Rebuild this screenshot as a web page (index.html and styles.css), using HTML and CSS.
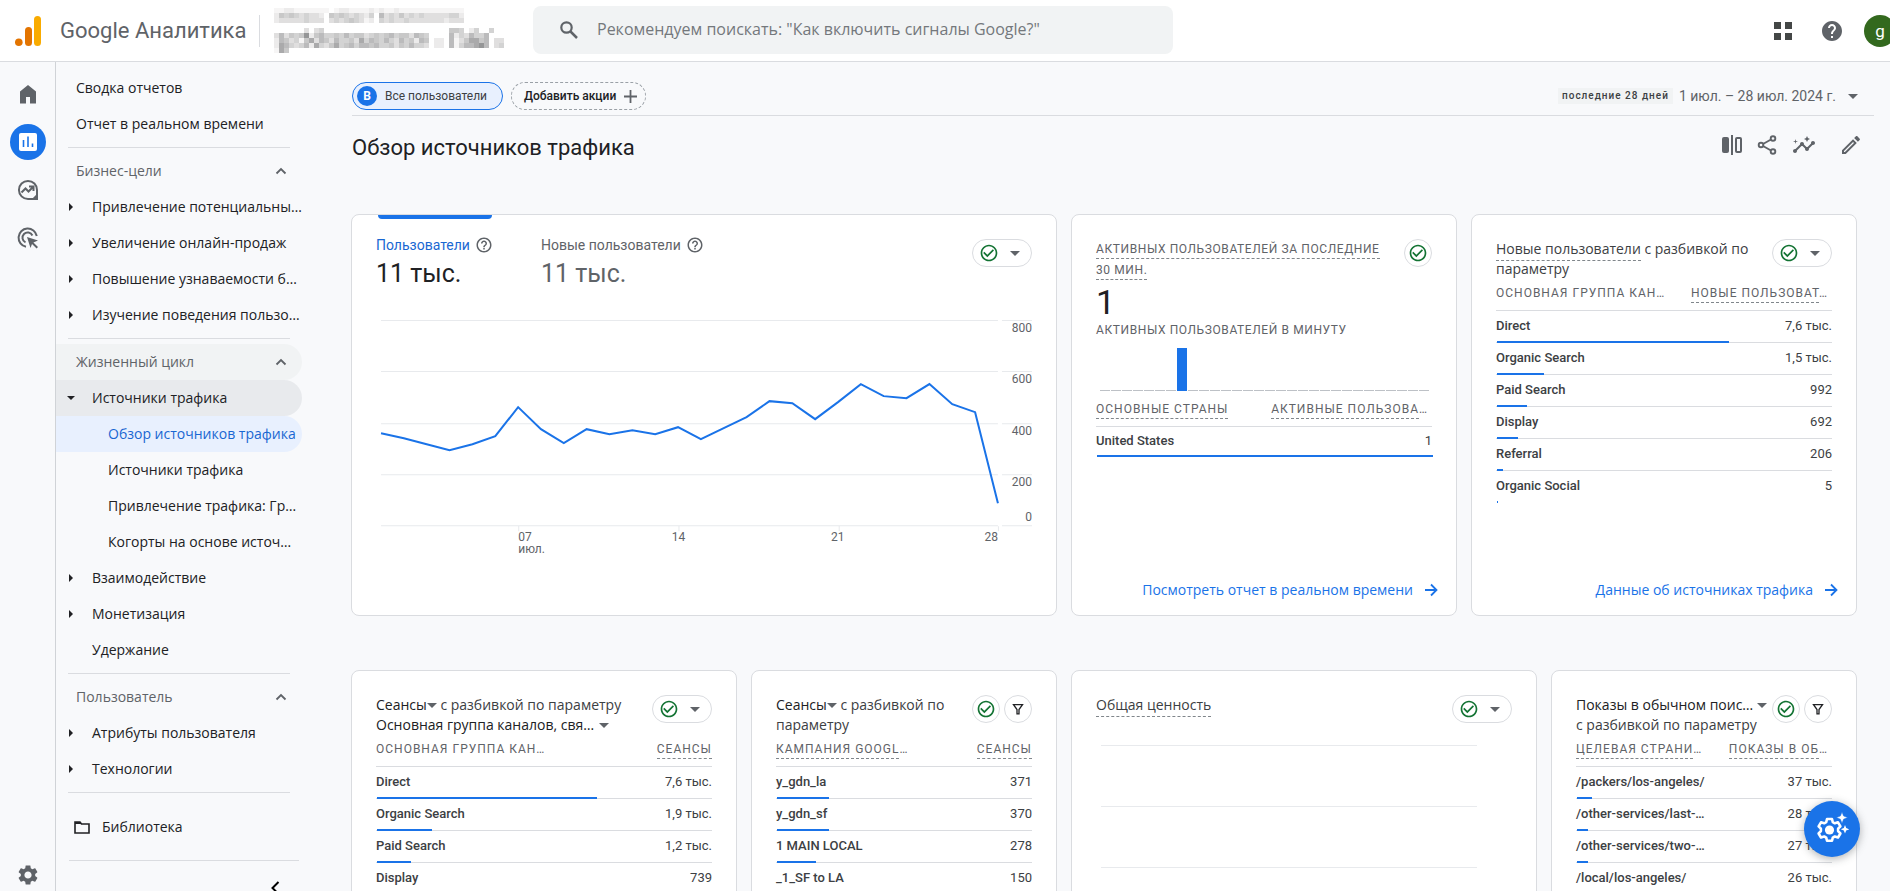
FILE: index.html
```html
<!DOCTYPE html>
<html lang="ru">
<head>
<meta charset="utf-8">
<meta name="viewport" content="width=device-width, initial-scale=1">
<title>Google Аналитика</title>
<link rel="stylesheet" href="styles.css">
</head>
<body>
<svg class="sprite" aria-hidden="true">
  <symbol id="i-check" viewBox="0 0 24 24"><path d="M16.6 7.6 10 14.2l-3.6-3.6L5 12l5 5 8-8zM12 2C6.5 2 2 6.5 2 12s4.5 10 10 10 10-4.500 10-10S17.500 2 12 2zm0 18c-4.400 0-8-3.600-8-8s3.600-8 8-8 8 3.600 8 8-3.600 8-8 8z"/></symbol>
  <symbol id="i-help" viewBox="0 0 24 24"><path d="M11 18h2v-2h-2v2zm1-16C6.480 2 2 6.480 2 12s4.480 10 10 10 10-4.480 10-10S17.520 2 12 2zm0 18c-4.410 0-8-3.590-8-8s3.590-8 8-8 8 3.590 8 8-3.590 8-8 8zm0-14c-2.210 0-4 1.790-4 4h2c0-1.100.9-2 2-2s2 .9 2 2c0 2-3 1.750-3 5h2c0-2.250 3-2.500 3-5 0-2.210-1.790-4-4-4z"/></symbol>
  <symbol id="i-down" viewBox="0 0 10 5"><path d="M0 0h10L5 5z"/></symbol>
  <symbol id="i-right" viewBox="0 0 4 8"><path d="M0 0v8l4-4z"/></symbol>
  <symbol id="i-up" viewBox="0 0 12 8"><path d="M1.500 6.500 6 2l4.500 4.500" fill="none" stroke="currentColor" stroke-width="1.800"/></symbol>
  <symbol id="i-arrow" viewBox="0 0 14 14"><path d="M1 7h11M7 1.500 12.500 7 7 12.500" fill="none" stroke="currentColor" stroke-width="1.800"/></symbol>
  <symbol id="i-filter" viewBox="0 0 12 12"><path d="M1.500 1.700h9L7 6.500v4.300H5V6.500z" fill="none" stroke="currentColor" stroke-width="1.300"/></symbol>
  <symbol id="i-gear" viewBox="0 0 24 24"><path d="M19.140 12.940c.04-.3.060-.61.060-.94 0-.32-.02-.64-.07-.94l2.030-1.580c.18-.14.23-.41.120-.61l-1.920-3.320c-.12-.22-.37-.29-.59-.22l-2.390.96c-.5-.38-1.030-.7-1.620-.94l-.36-2.540c-.04-.24-.24-.41-.48-.41h-3.840c-.24 0-.43.17-.47.41l-.36 2.540c-.59.24-1.130.57-1.620.94l-2.390-.96c-.22-.08-.47 0-.59.22L2.740 8.870c-.12.21-.08.47.12.61l2.030 1.580c-.05.3-.09.63-.09.94s.02.64.07.94l-2.030 1.580c-.18.14-.23.41-.12.61l1.920 3.320c.12.22.37.29.59.22l2.390-.96c.5.38 1.030.7 1.620.94l.36 2.540c.05.24.24.41.48.41h3.840c.24 0 .44-.17.47-.41l.36-2.540c.59-.24 1.130-.56 1.620-.94l2.390.96c.22.08.47 0 .59-.22l1.920-3.320c.12-.22.070-.47-.12-.61l-2.010-1.580zM12 15.600c-1.980 0-3.600-1.620-3.600-3.600s1.620-3.600 3.600-3.600 3.600 1.620 3.600 3.600-1.620 3.600-3.600 3.600z"/></symbol>
</svg>

<header class="topbar">
  <a class="brand" href="#">
    <svg class="brand-mark" viewBox="0 0 26 30" aria-hidden="true"><rect x="19" width="7" height="30" rx="3.500" fill="#f9ab00"/><rect x="10" y="11" width="7" height="19" rx="3.500" fill="#e37400"/><circle cx="3.800" cy="26.200" r="3.800" fill="#e37400"/></svg>
    <span class="brand-name">Google Аналитика</span>
  </a>
  <svg class="account" id="account" viewBox="0 0 235 45" role="img" aria-label="Аккаунт"></svg>
  <label class="search">
    <svg viewBox="0 0 18 18" aria-hidden="true"><circle cx="6.500" cy="6.500" r="5.200" fill="none" stroke="#5f6368" stroke-width="2.200"/><path d="m10.500 10.500 6.500 6.500" stroke="#5f6368" stroke-width="2.500"/></svg>
    <input type="search" aria-label="Поиск" placeholder='Рекомендуем поискать: "Как включить сигналы Google?"'>
  </label>
  <div class="top-actions">
    <button class="icon-btn" aria-label="Приложения"><svg width="18" height="18" viewBox="0 0 18 18"><path d="M0 0h7v7H0zM11 0h7v7h-7zM0 11h7v7H0zM11 11h7v7h-7z" fill="#444746"/></svg></button>
    <button class="icon-btn" aria-label="Справка"><svg width="24" height="24" viewBox="0 0 24 24"><path fill="#5f6368" d="M12 2C6.480 2 2 6.480 2 12s4.480 10 10 10 10-4.480 10-10S17.520 2 12 2zm1 17h-2v-2h2v2zm2.070-7.750-.9.920C13.450 12.900 13 13.500 13 15h-2v-.5c0-1.100.45-2.100 1.170-2.830l1.240-1.260c.37-.36.590-.86.590-1.410 0-1.100-.9-2-2-2s-2 .9-2 2H8c0-2.210 1.790-4 4-4s4 1.790 4 4c0 .88-.36 1.680-.93 2.250z"/></svg></button>
    <button class="avatar" aria-label="Аккаунт Google">g</button>
  </div>
</header>

<div class="shell">
  <nav class="rail" aria-label="Разделы">
    <a href="#" aria-label="Главная"><svg width="18" height="19" viewBox="0 0 18 19"><path d="M9 0 1 6.500V18.500h6V12h4v6.500h6V6.500z"/></svg></a>
    <a href="#" class="rail-active" aria-label="Отчеты"><svg width="20" height="20" viewBox="0 0 20 20"><rect x="1" y="1" width="18" height="18" rx="2" fill="#fff"/><path d="M5.500 8v7M10 4.500V15M14.500 11.500V15" stroke="#1a73e8" stroke-width="1.600"/></svg></a>
    <a href="#" aria-label="Исследования"><svg width="22" height="22" viewBox="0 0 22 22"><path d="M11 1.900a9 9 0 1 0 0 18.100h9V11a9 9 0 0 0-9-9.100z" fill="none" stroke="currentColor" stroke-width="2"/><path d="m4.500 13.500 4-4 3 3L16 8M12 7.500h4.500V12" fill="none" stroke="currentColor" stroke-width="2"/><path d="M20.900 14v7H14z"/></svg></a>
    <a href="#" aria-label="Реклама"><svg width="22" height="22" viewBox="0 0 22 22"><path d="M9 19.800A9.200 9.200 0 1 1 19.800 9M8.500 15.400A5.200 5.200 0 1 1 15.400 8.500" fill="none" stroke="currentColor" stroke-width="2"/><path d="m10 10 11 3.600-4.600 1.900 4.600 4.600-1.400 1.400-4.600-4.600-1.500 4.100z"/></svg></a>
    <a href="#" class="rail-bottom" aria-label="Администратор"><svg width="24" height="24"><use href="#i-gear"/></svg></a>
  </nav>

  <nav class="side" aria-label="Отчеты">
    <a class="item top" href="#">Сводка отчетов</a>
    <a class="item top" href="#">Отчет в реальном времени</a>
    <hr>
    <button class="item section">Бизнес-цели<svg class="up"><use href="#i-up"/></svg></button>
    <a class="item" href="#"><svg class="tri"><use href="#i-right"/></svg>Привлечение потенциальны…</a>
    <a class="item" href="#"><svg class="tri"><use href="#i-right"/></svg>Увеличение онлайн-продаж</a>
    <a class="item" href="#"><svg class="tri"><use href="#i-right"/></svg>Повышение узнаваемости б…</a>
    <a class="item" href="#"><svg class="tri"><use href="#i-right"/></svg>Изучение поведения пользо…</a>
    <hr>
    <button class="item section hovered">Жизненный цикл<svg class="up"><use href="#i-up"/></svg></button>
    <a class="item open" href="#"><svg class="tri-down"><use href="#i-down"/></svg>Источники трафика</a>
    <a class="item sub current" href="#">Обзор источников трафика</a>
    <a class="item sub" href="#">Источники трафика</a>
    <a class="item sub" href="#">Привлечение трафика: Гр…</a>
    <a class="item sub" href="#">Когорты на основе источ…</a>
    <a class="item" href="#"><svg class="tri"><use href="#i-right"/></svg>Взаимодействие</a>
    <a class="item" href="#"><svg class="tri"><use href="#i-right"/></svg>Монетизация</a>
    <a class="item" href="#">Удержание</a>
    <hr>
    <button class="item section">Пользователь<svg class="up"><use href="#i-up"/></svg></button>
    <a class="item" href="#"><svg class="tri"><use href="#i-right"/></svg>Атрибуты пользователя</a>
    <a class="item" href="#"><svg class="tri"><use href="#i-right"/></svg>Технологии</a>
    <hr>
    <a class="item library" href="#"><svg width="16" height="13" viewBox="0 0 16 13"><path d="M1 1h5l1.500 2H15v9H1z" fill="none" stroke="currentColor" stroke-width="1.600"/><path d="M1 1h5l1.500 2H1z"/></svg>Библиотека</a>
    <div class="side-foot"><button class="collapse" aria-label="Свернуть"><svg width="9" height="14" viewBox="0 0 9 14"><path d="M7.500 1 1.500 7l6 6" fill="none" stroke="currentColor" stroke-width="2"/></svg></button></div>
  </nav>

  <main class="main">
    <div class="toolbar">
      <button class="chip chip-on"><span class="chip-badge">B</span>Все пользователи</button>
      <button class="chip chip-add">Добавить акции<svg width="13" height="13" viewBox="0 0 13 13"><path d="M6.500 0v13M0 6.500h13" stroke="#5f6368" stroke-width="1.800"/></svg></button>
      <button class="dates"><span class="period">последние 28 дней</span>1 июл. – 28 июл. 2024 г.<svg class="caret"><use href="#i-down"/></svg></button>
    </div>
    <div class="title-row">
      <h1>Обзор источников трафика</h1>
      <div class="tools">
        <button class="icon-btn" aria-label="Сравнить"><svg width="20" height="20" viewBox="0 0 20 20"><rect y="2" width="7" height="16" rx="2"/><path d="M9 0h2v20H9z"/><rect x="14" y="3" width="5" height="14" rx="1" fill="none" stroke="currentColor" stroke-width="2"/></svg></button>
        <button class="icon-btn" aria-label="Поделиться"><svg width="20" height="20" viewBox="0 0 20 20"><g fill="none" stroke="currentColor" stroke-width="1.900"><circle cx="16" cy="3.500" r="2.300"/><circle cx="4" cy="10" r="2.300"/><circle cx="16" cy="16.500" r="2.300"/><path d="m6 9 8-4.500M6 11l8 4.500"/></g></svg></button>
        <button class="icon-btn" aria-label="Статистика"><svg width="24" height="24" viewBox="0 0 24 24"><path d="M21 8c-1.450 0-2.260 1.440-1.930 2.510l-3.550 3.560c-.3-.09-.74-.09-1.040 0l-2.550-2.550C12.270 10.450 11.460 9 10 9c-1.450 0-2.270 1.440-1.930 2.520l-4.560 4.550C2.440 15.740 1 16.550 1 18c0 1.100.9 2 2 2 1.450 0 2.260-1.440 1.930-2.510l4.550-4.560c.3.090.74.090 1.040 0l2.550 2.550C12.730 16.550 13.540 18 15 18c1.450 0 2.270-1.440 1.930-2.520l3.560-3.550C21.560 12.260 23 11.450 23 10c0-1.100-.9-2-2-2zM15 9l.94-2.070L18 6l-2.060-.93L15 3l-.92 2.070L12 6l2.080.93zM3.500 11 4 9l2-.5L4 8l-.5-2L3 8l-2 .5L3 9z"/></svg></button>
        <button class="icon-btn edit" aria-label="Изменить"><svg width="24" height="24" viewBox="0 0 24 24"><path d="m14.060 9.020.92.920L5.920 19H5v-.92l9.060-9.060M17.660 3c-.25 0-.51.100-.7.290l-1.830 1.830 3.750 3.750 1.830-1.830c.39-.39.39-1.020 0-1.410l-2.340-2.340c-.2-.2-.45-.29-.71-.29zm-3.600 3.190L3 17.250V21h3.750L17.810 9.940l-3.750-3.750z"/></svg></button>
      </div>
    </div>

    <div class="cards">
      <section class="card w9 tall">
        <div class="tabs">
          <button class="tab tab-on"><span class="tab-name">Пользователи<svg class="q"><use href="#i-help"/></svg></span><span class="tab-value">11 тыс.</span></button>
          <button class="tab"><span class="tab-name">Новые пользователи<svg class="q"><use href="#i-help"/></svg></span><span class="tab-value">11 тыс.</span></button>
          <button class="pill" aria-label="Качество данных"><svg class="ok"><use href="#i-check"/></svg><svg class="caret"><use href="#i-down"/></svg></button>
        </div>
        <svg class="line-chart" viewBox="0 0 655 250" role="img" aria-label="Пользователи по дням">
          <g transform="translate(1 0)">
            <path class="grid" d="M4 10.500h616M624 10.500h30M4 61.500h616M624 61.500h30M4 113.500h616M624 113.500h30M4 164.500h616M624 164.500h30M4 215.500h616M624 215.500h30M141.500 216v5M301.500 216v5M461.500 216v5M620.500 216v5"/>
            <polyline class="trend" points="4,123 26.800,128 49.600,134 72.400,140 95.300,134 118.100,126 140.900,97 163.700,119 186.500,133 209.300,119 232.100,124 255,120 277.800,124 300.600,117 323.400,129 346.200,118 369,107 391.900,91 414.700,93 437.500,109 460.300,92 483.100,74 505.900,86 528.700,88 551.600,74 574.400,94 597.200,102 620,193"/>
            <g class="axis" text-anchor="end"><text x="654" y="22">800</text><text x="654" y="73">600</text><text x="654" y="125">400</text><text x="654" y="176">200</text><text x="654" y="211">0</text><text x="620" y="231">28</text></g>
            <g class="axis"><text x="141" y="231">07</text><text x="141" y="243">июл.</text></g>
            <g class="axis" text-anchor="middle"><text x="301" y="231">14</text><text x="460" y="231">21</text></g>
          </g>
        </svg>
      </section>

      <section class="card w5 tall">
        <div class="card-head">
          <h2 class="caps"><span class="dash">Активных пользователей за последние 30&nbsp;мин.</span></h2>
          <button class="round" aria-label="Качество данных"><svg class="ok"><use href="#i-check"/></svg></button>
        </div>
        <p class="big">1</p>
        <p class="caps">Активных пользователей в минуту</p>
        <div class="minutes" id="minutes"></div>
        <table class="data countries">
          <thead><tr><th><span class="dash">Основные страны</span></th><th class="cut"><span class="dash">Активные пользова</span>…</th></tr></thead>
          <tbody><tr><td>United States<i class="bar" style="width:100%"></i></td><td>1</td></tr></tbody>
        </table>
        <a class="more" href="#">Посмотреть отчет в реальном времени<svg><use href="#i-arrow"/></svg></a>
      </section>

      <section class="card w5 tall">
        <div class="card-head">
          <h2><span class="dash">Новые пользователи</span> с разбивкой по параметру</h2>
          <button class="pill" aria-label="Качество данных"><svg class="ok"><use href="#i-check"/></svg><svg class="caret"><use href="#i-down"/></svg></button>
        </div>
        <table class="data">
          <thead><tr><th>Основная группа кан…</th><th class="cut"><span class="dash">Новые пользоват</span>…</th></tr></thead>
          <tbody>
            <tr><td>Direct<i class="bar" style="width:69%"></i></td><td>7,6 тыс.</td></tr>
            <tr><td>Organic Search<i class="bar" style="width:14%"></i></td><td>1,5 тыс.</td></tr>
            <tr><td>Paid Search<i class="bar" style="width:9%"></i></td><td>992</td></tr>
            <tr><td>Display<i class="bar" style="width:6.300%"></i></td><td>692</td></tr>
            <tr><td>Referral<i class="bar" style="width:1.900%"></i></td><td>206</td></tr>
            <tr><td>Organic Social<i class="bar" style="width:0.300%"></i></td><td>5</td></tr>
          </tbody>
        </table>
        <a class="more" href="#">Данные об источниках трафика<svg><use href="#i-arrow"/></svg></a>
      </section>

      <section class="card w5">
        <div class="card-head">
          <h2><button class="pick">Сеансы<svg class="caret"><use href="#i-down"/></svg></button> с разбивкой по параметру <button class="pick wide">Основная группа каналов, свя…<svg class="caret"><use href="#i-down"/></svg></button></h2>
          <button class="pill" aria-label="Качество данных"><svg class="ok"><use href="#i-check"/></svg><svg class="caret"><use href="#i-down"/></svg></button>
        </div>
        <table class="data">
          <thead><tr><th>Основная группа кан…</th><th><span class="dash">Сеансы</span></th></tr></thead>
          <tbody>
            <tr><td>Direct<i class="bar" style="width:65.400%"></i></td><td>7,6 тыс.</td></tr>
            <tr><td>Organic Search<i class="bar" style="width:16.400%"></i></td><td>1,9 тыс.</td></tr>
            <tr><td>Paid Search<i class="bar" style="width:10.200%"></i></td><td>1,2 тыс.</td></tr>
            <tr><td>Display<i class="bar" style="width:6.300%"></i></td><td>739</td></tr>
          </tbody>
        </table>
      </section>

      <section class="card w4">
        <div class="card-head">
          <h2><button class="pick">Сеансы<svg class="caret"><use href="#i-down"/></svg></button> с разбивкой по параметру</h2>
          <span class="pair"><button class="round" aria-label="Качество данных"><svg class="ok"><use href="#i-check"/></svg></button><button class="round" aria-label="Фильтр"><svg class="flt"><use href="#i-filter"/></svg></button></span>
        </div>
        <table class="data">
          <thead><tr><th><span class="dash">Кампания Googl</span>…</th><th><span class="dash">Сеансы</span></th></tr></thead>
          <tbody>
            <tr><td>y_gdn_la<i class="bar" style="width:20.400%"></i></td><td>371</td></tr>
            <tr><td>y_gdn_sf<i class="bar" style="width:20.400%"></i></td><td>370</td></tr>
            <tr><td>1 MAIN LOCAL<i class="bar" style="width:15.300%"></i></td><td>278</td></tr>
            <tr><td>_1_SF to LA<i class="bar" style="width:8.200%"></i></td><td>150</td></tr>
          </tbody>
        </table>
      </section>

      <section class="card w6">
        <div class="card-head">
          <h2><span class="dash">Общая ценность</span></h2>
          <button class="pill" aria-label="Качество данных"><svg class="ok"><use href="#i-check"/></svg><svg class="caret"><use href="#i-down"/></svg></button>
        </div>
        <div class="empty-chart"><i></i><i></i><i></i></div>
      </section>

      <section class="card w4">
        <div class="card-head tight">
          <h2><button class="pick spaced">Показы в обычном поис…<svg class="caret"><use href="#i-down"/></svg></button> с разбивкой по параметру</h2>
          <span class="pair"><button class="round" aria-label="Качество данных"><svg class="ok"><use href="#i-check"/></svg></button><button class="round" aria-label="Фильтр"><svg class="flt"><use href="#i-filter"/></svg></button></span>
        </div>
        <table class="data">
          <thead><tr><th><span class="dash">Целевая страни</span>…</th><th class="cut"><span class="dash">Показы в об</span>…</th></tr></thead>
          <tbody>
            <tr><td>/packers/los-angeles/<i class="bar" style="width:5.900%"></i></td><td>37 тыс.</td></tr>
            <tr><td>/other-services/last-…<i class="bar" style="width:4.300%"></i></td><td>28 тыс.</td></tr>
            <tr><td>/other-services/two-…<i class="bar" style="width:4.300%"></i></td><td>27 тыс.</td></tr>
            <tr><td>/local/los-angeles/<i class="bar" style="width:4%"></i></td><td>26 тыс.</td></tr>
          </tbody>
        </table>
      </section>
    </div>
  </main>
</div>

<button class="fab" aria-label="Настройки">
  <svg width="34" height="34" viewBox="0 0 34 34"><path d="M12 7h5l.8 3.200 2 1.100 3.200-1 2.400 4-2.300 2.400v2.400l2.300 2.400-2.400 4-3.200-1-2 1.100-.8 3.200h-5l-.8-3.200-2-1.100-3.200 1-2.400-4 2.300-2.400v-2.400l-2.300-2.400 2.400-4 3.200 1 2-1.100z" fill="none" stroke="#fff" stroke-width="2.600" stroke-linejoin="round"/><circle cx="14.500" cy="18" r="4.600" fill="#fff"/><path d="m27 0 1.600 4 4 1.600-4 1.600L27 11.200l-1.600-4-4-1.600 4-1.600z" fill="#fff" stroke="#1a73e8" stroke-width=".5"/><path d="m30 13 1.200 3.100 3 1.200-3 1.200L30 21.600l-1.200-3.100-3-1.200 3-1.200z" fill="#fff"/></svg>
</button>
<script src="app.js"></script>
</body>
</html>
```
FILE: styles.css
```css
:root {
  --blue: #1a73e8;
  --ink: #202124;
  --mid: #3c4043;
  --soft: #5f6368;
  --line: #dadce0;
  --page: #f8f9fb;
  --ui: Roboto, "Noto Sans", sans-serif;
  --text: "Open Sans", "Noto Sans", sans-serif;
}

* { box-sizing: border-box; }

body {
  margin: 0;
  height: 100vh;
  display: flex;
  flex-direction: column;
  overflow: hidden;
  background: var(--page);
  color: var(--ink);
  font: 14px/20px var(--ui);
}

button {
  padding: 0;
  border: 0;
  background: none;
  color: inherit;
  font: inherit;
  text-align: left;
  cursor: pointer;
}

a { color: inherit; text-decoration: none; }
h1, h2, p { margin: 0; font-weight: 400; }
svg { display: block; flex: none; fill: currentColor; }
.sprite { position: absolute; width: 0; height: 0; }
.caret { width: 10px; height: 5px; color: var(--soft); }

/* Header */
.topbar {
  flex: none;
  display: flex;
  align-items: center;
  height: 62px;
  border-bottom: 1px solid var(--line);
  background: #fff;
}
.brand {
  display: flex;
  align-items: center;
  gap: 19px;
  width: 260px;
  height: 32px;
  padding-left: 15px;
  border-right: 1px solid var(--line);
  color: var(--soft);
}
.brand-mark { width: 26px; height: 30px; }
.brand-name { font-size: 22px; white-space: nowrap; }
.account { width: 235px; height: 45px; margin: 0 24px 0 14px; }
.search {
  flex: 0 1 640px;
  display: flex;
  align-items: center;
  gap: 19px;
  height: 48px;
  margin-bottom: 2px;
  padding: 0 27px;
  border-radius: 8px;
  background: #f1f3f4;
}
.search svg { width: 18px; height: 18px; }
.search input {
  flex: 1;
  min-width: 0;
  padding: 0 0 2px;
  border: 0;
  outline: 0;
  background: none;
  font: 16px/24px var(--text);
}
.search input::placeholder { color: #74787c; opacity: 1; }
.top-actions {
  display: flex;
  align-items: center;
  margin: 0 -6px 0 auto;
}
.icon-btn { display: flex; color: var(--soft); }
.top-actions .icon-btn { margin-right: 28px; }
.top-actions .icon-btn + .icon-btn { margin-right: 20px; }
.avatar {
  width: 32px;
  height: 32px;
  border-radius: 50%;
  background: #33691e;
  color: #fff;
  font-size: 17px;
  text-align: center;
}

/* Frame */
.shell { flex: 1; min-height: 0; display: flex; }
.rail {
  flex: none;
  display: flex;
  flex-direction: column;
  align-items: center;
  gap: 12px;
  width: 56px;
  padding: 14px 0 4px;
  border-right: 1px solid #d0d3d7;
  color: var(--soft);
}
.rail a {
  display: grid;
  place-items: center;
  width: 36px;
  height: 36px;
  border-radius: 50%;
}
.rail-active { background: var(--blue); }
.rail .rail-bottom { margin: auto 0 -6px; }

.side {
  flex: none;
  width: 246px;
  padding-top: 8px;
  overflow: hidden;
  font-family: var(--text);
}
.item {
  position: relative;
  display: flex;
  align-items: center;
  width: 100%;
  height: 36px;
  padding-left: 36px;
  border-radius: 0 18px 18px 0;
  white-space: nowrap;
}
.item.top, .item.section { padding-left: 20px; }
.item.section { justify-content: space-between; padding-right: 15px; color: var(--soft); }
.item.sub { padding-left: 52px; }
.hovered { background: #f1f3f4; }
.open { background: #e8eaed; }
.current { background: #e8f0fe; color: #1967d2; }
.up { width: 12px; height: 8px; }
.tri, .tri-down { position: absolute; left: 13px; width: 4px; height: 8px; }
.tri-down { left: 11px; width: 8px; height: 4px; }
.side hr { height: 1px; margin: 5px 12px; border: 0; background: var(--line); }
.item.library { gap: 12px; height: 60px; margin-top: -1px; padding-left: 18px; }
.side-foot {
  display: flex;
  justify-content: flex-end;
  margin: 3px 3px 0 13px;
  padding: 20px 17px 0 0;
  border-top: 1px solid var(--line);
}
.collapse { padding: 0 2px; color: #000; }

/* Report */
.main { flex: 1; min-width: 0; padding: 20px 33px 0 49px; overflow: hidden; }
.toolbar {
  display: flex;
  align-items: center;
  gap: 8px;
  margin: 0 -17px 0 1px;
  padding-bottom: 5px;
  border-bottom: 1px solid var(--line);
}
.chip {
  display: flex;
  align-items: center;
  height: 28px;
  border: 1px solid var(--blue);
  border-radius: 14px;
  font-size: 12px;
}
.chip-on { gap: 8px; padding: 0 15px 0 4px; background: #e8f0fe; color: var(--mid); }
.chip-badge {
  width: 20px;
  height: 20px;
  border-radius: 50%;
  background: var(--blue);
  color: #fff;
  font-weight: 700;
  text-align: center;
}
.chip-add { gap: 8px; padding: 0 8px 0 12px; border: 1px dashed #9aa0a6; font-weight: 500; }
.dates {
  display: flex;
  align-items: center;
  margin: 0 16px 0 auto;
  color: var(--soft);
}
.period {
  margin-right: 6px;
  padding: 0 4px;
  background: #f1f3f4;
  color: var(--mid);
  font-size: 10px;
  font-weight: 500;
  line-height: 16px;
  letter-spacing: 1px;
}
.dates .caret { margin-left: 12px; }
.title-row {
  display: flex;
  align-items: center;
  justify-content: space-between;
  height: 58px;
  margin: 0 -6px 40px 1px;
}
h1 { padding-top: 5px; font-size: 22px; line-height: 28px; }
.tools { display: flex; align-items: center; gap: 15px; }
.edit { margin-left: 8px; }

.cards { display: grid; grid-template-columns: repeat(19, minmax(0, 1fr)); gap: 54px 14px; }
.card {
  position: relative;
  display: flex;
  flex-direction: column;
  min-height: 400px;
  padding: 24px 24px 15px;
  border: 1px solid var(--line);
  border-radius: 8px;
  background: #fff;
}
.tall { min-height: 402px; }
.w4 { grid-column: span 4; }
.w5 { grid-column: span 5; }
.w6 { grid-column: span 6; }
.w9 { grid-column: span 9; }

.tabs { display: flex; gap: 48px; }
.tab { position: relative; color: var(--soft); }
.tab-on::before {
  content: "";
  position: absolute;
  top: -24px;
  left: 2px;
  right: 1px;
  height: 4px;
  border-radius: 0 0 4px 4px;
  background: var(--blue);
}
.tab-name { display: flex; align-items: center; gap: 5px; height: 12px; }
.tab-value { display: block; margin-top: 5px; font-size: 25px; line-height: 35px; }
.tab-on .tab-name { color: #1967d2; }
.tab-on .tab-value { color: var(--ink); }
.q { width: 18px; height: 18px; color: var(--soft); }
.tabs .pill { margin-left: auto; }

.pill, .round {
  flex: none;
  display: flex;
  align-items: center;
  gap: 11px;
  width: 60px;
  height: 28px;
  padding-left: 6px;
  border: 1px solid var(--line);
  border-radius: 14px;
}
.round { justify-content: center; width: 28px; padding: 0; }
.pair { display: flex; gap: 4px; }
.ok { width: 20px; height: 20px; color: #137333; }
.flt { width: 12px; height: 12px; color: var(--ink); }

.line-chart { width: 100%; height: auto; margin-top: 19px; overflow: visible; }
.grid { fill: none; stroke: #e8eaed; }
.trend { fill: none; stroke: var(--blue); stroke-width: 2; }
.axis { fill: var(--soft); font: 12px var(--ui); }

.card-head { display: flex; justify-content: space-between; gap: 8px; min-height: 40px; }
.card-head.tight { gap: 0; }
h2 { flex: 1; min-width: 0; color: var(--mid); font: 400 14px/20px var(--text); }
.dash {
  padding-bottom: 2px;
  border-bottom: 1px dashed #80868b;
}
.card .caps {
  color: var(--soft);
  font: 400 12px/21px var(--ui);
  letter-spacing: 0.05em;
  text-transform: uppercase;
}
.pick { color: var(--ink); white-space: nowrap; }
.pick .caret { display: inline-block; vertical-align: 2px; }
.spaced .caret { margin-left: 4px; }
.wide .caret { margin-left: 5px; }

.big { font-size: 34px; line-height: 36px; margin-top: 3px; }
.minutes { display: flex; align-items: flex-end; gap: 1px; height: 43px; margin: 7px 3px 4px 4px; }
.minutes i { flex: 1; height: 1px; background: #bdc1c6; }
.minutes .hit { height: 100%; background: var(--blue); }

.data { width: 100%; border-collapse: collapse; font-size: 13px; }
.data th {
  height: 31px;
  padding: 0 0 3px;
  border-bottom: 1px solid var(--line);
  color: var(--soft);
  font-size: 12px;
  font-weight: 400;
  letter-spacing: 1px;
  text-align: left;
  text-transform: uppercase;
  white-space: nowrap;
}
.data .cut { padding-right: 4px; }
.data tr > :last-child { text-align: right; }
.data tbody tr { position: relative; height: 32px; }
.data.countries tbody tr { height: 30px; }
.data td { padding: 0; border-bottom: 1px solid var(--line); color: var(--mid); }
.data td:first-child { font-weight: 500; }
.data tbody tr:last-child td { border-bottom: 0; }
.bar { position: absolute; bottom: -1px; left: 1px; height: 2px; background: var(--blue); }
.more {
  display: flex;
  align-items: center;
  justify-content: flex-end;
  gap: 11px;
  margin: auto -6px 0 0;
  color: var(--blue);
  font-family: var(--text);
}
.more svg { width: 14px; height: 14px; }
.empty-chart { margin: 10px 35px 0 5px; }
.empty-chart i { display: block; height: 61px; border-top: 1px solid #e8eaed; }

.fab {
  position: fixed;
  right: 30px;
  bottom: 34px;
  display: grid;
  place-items: center;
  width: 56px;
  height: 56px;
  border-radius: 50%;
  background: var(--blue);
  box-shadow: 0 2px 8px rgba(60, 64, 67, .4);
}
```
FILE: app.js
```js
const SVG = "http://www.w3.org/2000/svg";
const shades = ["", "#f6f5f5", "#ecebeb", "#e0dfdf", "#d3d3d3", "#c8c8c8", "#bbbbbc", "#aaaaab", "#959697"];
const rows = [
  [0, "11221111111012211112121121111111111111"],
  [5, "25454343320545434324063435343433333442"],
  [10, "23333343330343454312043433433333332333"],
  [20, "00000030340000000000000000000000000554024004000"],
  [25, "36354582564454645534545645536540000624364460000"],
  [30, "26534157365364453746546436452650220613577560330"],
  [35, "27643462743574564665644535464430220614667860340"],
  [40, "1750000"],
];

// Censored account name: a mosaic of 5px cells.
const account = document.getElementById("account");
for (const [y, line] of rows) {
  [...line].forEach((level, column) => {
    if (level === "0") return;
    const cell = document.createElementNS(SVG, "rect");
    cell.setAttribute("x", column * 5);
    cell.setAttribute("y", y);
    cell.setAttribute("width", 5);
    cell.setAttribute("height", 5);
    cell.setAttribute("fill", shades[level]);
    account.append(cell);
  });
}

// One column per minute of the last half hour.
const minutes = document.getElementById("minutes");
for (let minute = 0; minute < 30; minute += 1) {
  const column = document.createElement("i");
  if (minute === 7) column.className = "hit";
  minutes.append(column);
}
```
